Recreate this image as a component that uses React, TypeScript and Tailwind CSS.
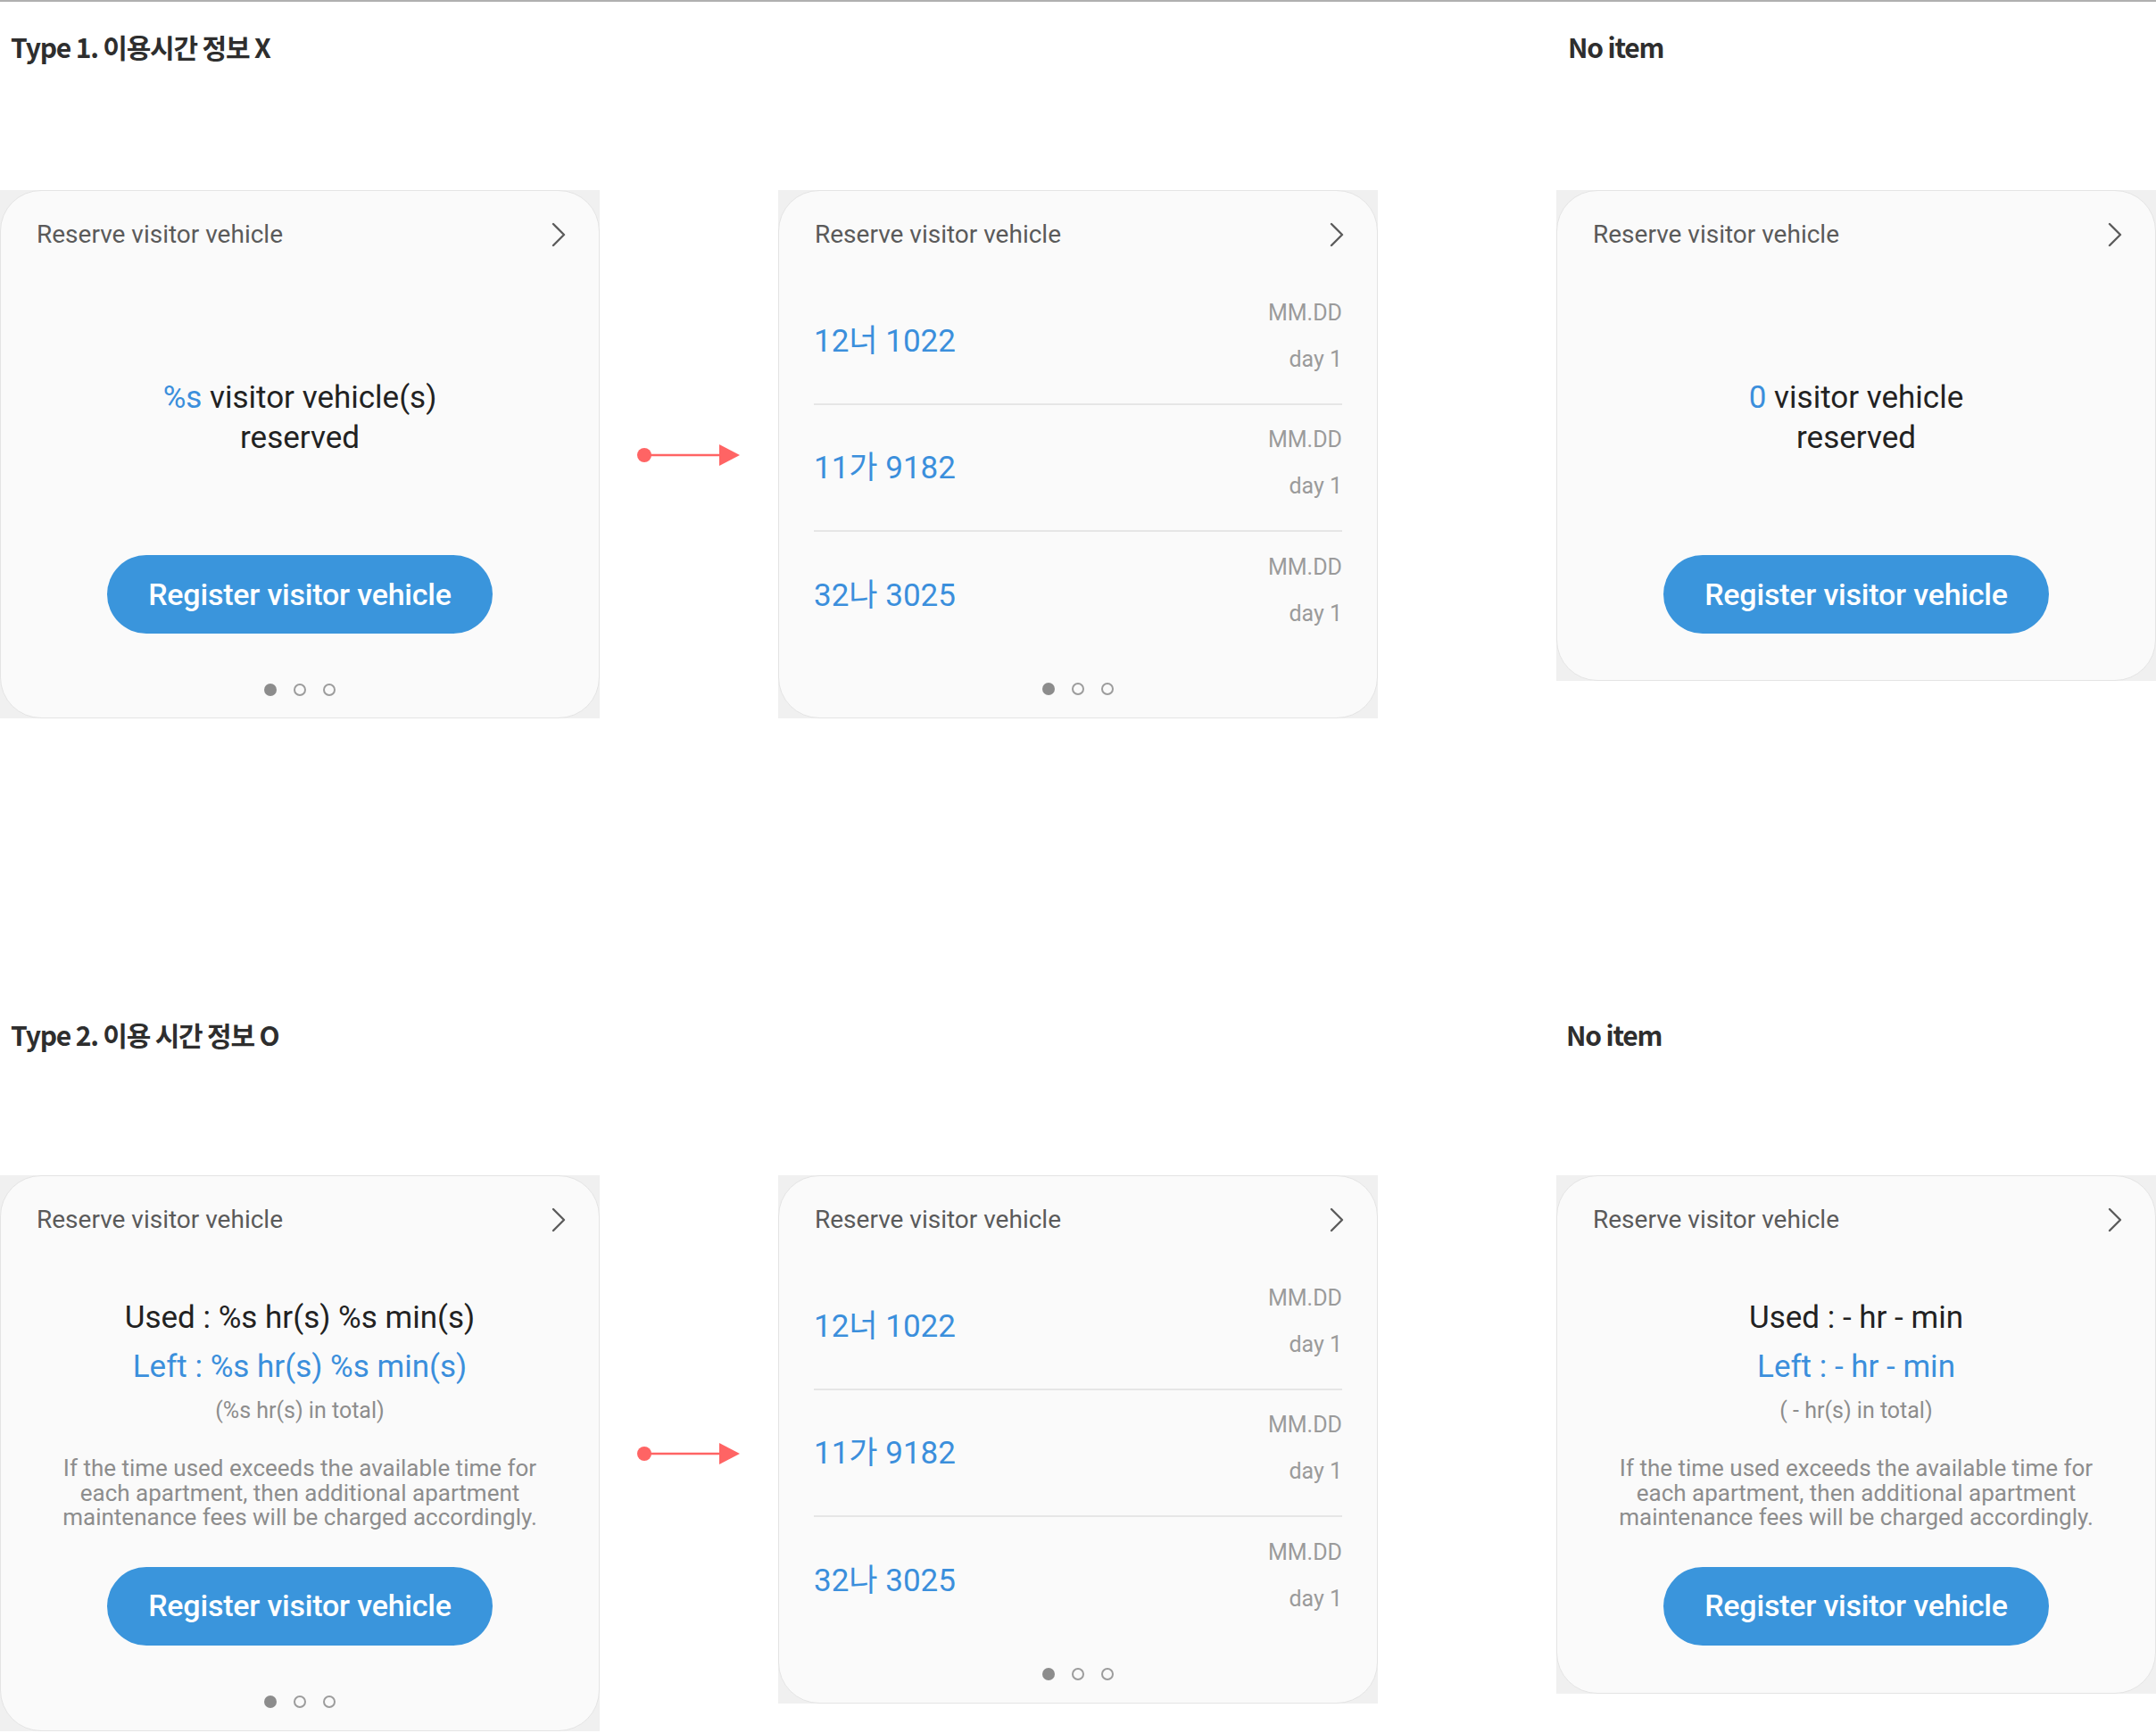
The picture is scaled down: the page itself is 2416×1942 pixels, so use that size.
import React from 'react';

const roboto = { fontFamily: 'Roboto, "Noto Sans CJK KR", sans-serif' };

const Chevron = () => (
  <svg width="16" height="28" viewBox="0 0 16 28" fill="none">
    <path d="M2 2 L14 14 L2 26" stroke="#5c5c5c" strokeWidth="2.4" strokeLinecap="round" strokeLinejoin="round" />
  </svg>
);

const Header = () => (
  <div className="flex items-center justify-between pl-[40px] pr-[37px] pt-[34px]">
    <span className="text-[28px] leading-[30px] text-[#5a5a5a]">Reserve visitor vehicle</span>
    <Chevron />
  </div>
);

const Dots = ({ className }: { className: string }) => (
  <div className={`flex items-center justify-center gap-[19px] ${className}`}>
    <span className="w-[14px] h-[14px] rounded-full bg-[#8c8c8c]" />
    <span className="w-[14px] h-[14px] rounded-full border-[2.5px] border-[#9c9c9c]" />
    <span className="w-[14px] h-[14px] rounded-full border-[2.5px] border-[#9c9c9c]" />
  </div>
);

const RegisterButton = ({ className }: { className: string }) => (
  <div className={`flex justify-center ${className}`}>
    <button className="w-[432px] h-[88px] rounded-full bg-[#3a95dc] text-white text-[34px] font-medium tracking-[-0.2px]">
      Register visitor vehicle
    </button>
  </div>
);

const CardShell = ({ height, children }: { height: number; children: React.ReactNode }) => (
  <div className="w-[672px] bg-[#f0f0f0]" style={{ height }}>
    <div className="h-full rounded-[46px] border border-[#e4e4e4] bg-[#fafafa] flex flex-col" style={roboto}>
      {children}
    </div>
  </div>
);

const ReservedCard = ({ count, label, dots }: { count: string; label: string; dots: boolean }) => (
  <CardShell height={dots ? 592 : 550}>
    <Header />
    <div className="mt-[145px] text-center text-[35px] leading-[45px] text-[#222]">
      <span className="text-[#3b8fdc]">{count}</span> {label}
      <br />
      reserved
    </div>
    <RegisterButton className="mt-[109px]" />
    {dots && <Dots className="mt-[56px]" />}
  </CardShell>
);

const plates = ['12너 1022', '11가 9182', '32나 3025'];

const ListCard = () => (
  <CardShell height={592}>
    <Header />
    <div className="mt-[34px] mx-[39px]">
      {plates.map((p, i) => (
        <div
          key={p}
          className={`h-[142px] flex items-center justify-between ${i < 2 ? 'border-b-2 border-[#e6e6e6]' : ''}`}
        >
          <span className="text-[35px] text-[#3b8fdc] pt-[3px]">{p}</span>
          <div className="flex flex-col items-end text-[25px] text-[#9b9b9b] leading-[52px] pb-[10px]">
            <span>MM.DD</span>
            <span>day 1</span>
          </div>
        </div>
      ))}
    </div>
    <Dots className="mt-[27px]" />
  </CardShell>
);

const TimeCard = ({ used, left, total, dots }: { used: string; left: string; total: string; dots: boolean }) => (
  <CardShell height={dots ? 623 : 581}>
    <Header />
    <div className="mt-[67px] text-center">
      <div className="text-[35px] leading-[55px] text-[#222]">{used}</div>
      <div className="text-[35px] leading-[55px] text-[#3b8fdc]">{left}</div>
      <div className="text-[25px] leading-[44px] text-[#8d8d8d]">{total}</div>
      <p className="mt-[29px] text-[26px] leading-[27.5px] text-[#8d8d8d]">
        If the time used exceeds the available time for
        <br />
        each apartment, then additional apartment
        <br />
        maintenance fees will be charged accordingly.
      </p>
    </div>
    <RegisterButton className="mt-[41px]" />
    {dots && <Dots className="mt-[56px]" />}
  </CardShell>
);

const Arrow = ({ className }: { className: string }) => (
  <div className={className}>
    <svg width="120" height="26" viewBox="0 0 120 26" className="ml-[40px]">
      <circle cx="10" cy="13" r="8" fill="#ff6464" />
      <line x1="10" y1="13" x2="96" y2="13" stroke="#ff6464" strokeWidth="2.5" />
      <polygon points="94,1 117,13 94,25" fill="#ff6464" />
    </svg>
  </div>
);

const Title = ({ children, className }: { children: React.ReactNode; className: string }) => (
  <h2
    className={`text-[30px] leading-[40px] font-semibold text-[#2e2e2e] tracking-[-1.2px] ${className}`}
    style={{ fontFamily: '"Noto Sans CJK KR", sans-serif' }}
  >
    {children}
  </h2>
);

export default function App() {
  return (
    <div className="w-[2416px] h-[1942px] bg-white border-t-2 border-[#b0b0b0] overflow-hidden">
      {/* Type 1 */}
      <div className="grid grid-cols-[672px_200px_672px_200px_672px] pt-[30px]">
        <Title className="pl-[12px]">Type 1. 이용시간 정보 X</Title>
        <div />
        <div />
        <div />
        <Title className="pl-[13px]">No item</Title>
      </div>
      <div className="grid grid-cols-[672px_200px_672px_200px_672px] items-start mt-[141px]">
        <ReservedCard count="%s" label="visitor vehicle(s)" dots />
        <Arrow className="pt-[284px]" />
        <ListCard />
        <div />
        <ReservedCard count="0" label="visitor vehicle" dots={false} />
      </div>

      {/* Type 2 */}
      <div className="grid grid-cols-[672px_200px_672px_200px_672px] mt-[334px]">
        <Title className="pl-[12px]">Type 2. 이용 시간 정보 O</Title>
        <div />
        <div />
        <div />
        <Title className="pl-[11px]">No item</Title>
      </div>
      <div className="grid grid-cols-[672px_200px_672px_200px_672px] items-start mt-[138px]">
        <TimeCard used="Used : %s hr(s) %s min(s)" left="Left : %s hr(s) %s min(s)" total="(%s hr(s) in total)" dots />
        <Arrow className="pt-[299px]" />
        <ListCard />
        <div />
        <TimeCard used="Used : - hr - min" left="Left : - hr - min" total="( - hr(s) in total)" dots={false} />
      </div>
    </div>
  );
}
